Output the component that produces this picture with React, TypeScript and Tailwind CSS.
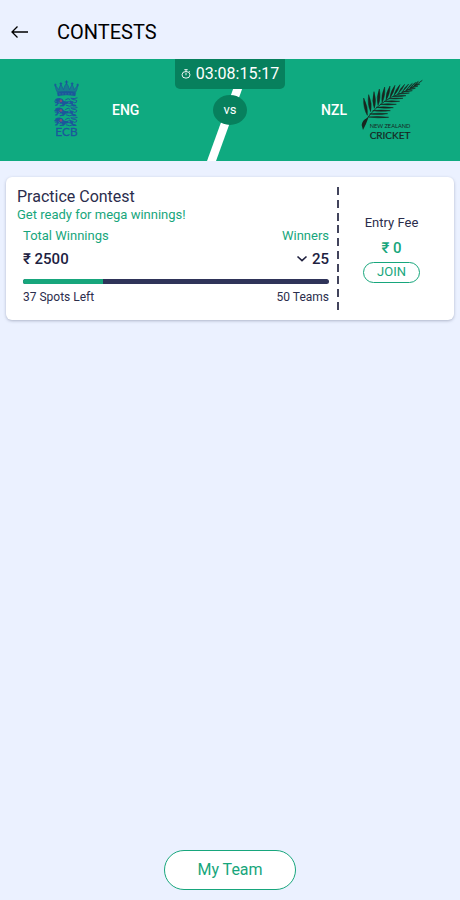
import React from "react";

type Point = [number, number];

// Each leaflet: where it leaves the spine, its tip, and its half width at the belly.
const leaflets: { base: Point; tip: Point; width: number }[] = [
  { base: [37, 132], tip: [26, 80], width: 8 },
  { base: [47, 121], tip: [41, 70], width: 8 },
  { base: [58, 111], tip: [57, 61], width: 8 },
  { base: [69, 102], tip: [73, 53], width: 8 },
  { base: [81, 94], tip: [89, 47], width: 7 },
  { base: [93, 86], tip: [105, 44], width: 7 },
  { base: [105, 79], tip: [120, 42], width: 6 },
  { base: [117, 72], tip: [135, 40], width: 5 },
  { base: [130, 66], tip: [149, 39], width: 4 },
  { base: [143, 60], tip: [161, 38], width: 3 },
  { base: [155, 55], tip: [172, 36], width: 2 },
  { base: [166, 49], tip: [182, 33], width: 2 },
  { base: [177, 43], tip: [190, 30], width: 2 },
  { base: [40, 137], tip: [101, 138], width: 4 },
  { base: [44, 128], tip: [98, 127], width: 4 },
  { base: [53, 118], tip: [106, 118], width: 4 },
  { base: [63, 108], tip: [115, 109], width: 4 },
  { base: [75, 99], tip: [124, 99], width: 4 },
  { base: [88, 90], tip: [134, 90], width: 4 },
  { base: [101, 82], tip: [144, 81], width: 3 },
  { base: [114, 75], tip: [153, 73], width: 3 },
  { base: [127, 68], tip: [163, 65], width: 2 },
  { base: [140, 62], tip: [172, 58], width: 2 },
  { base: [153, 56], tip: [181, 51], width: 2 },
  { base: [165, 50], tip: [189, 44], width: 2 },
  { base: [177, 43], tip: [195, 38], width: 2 },
];

function leafPath(base: Point, tip: Point, width: number) {
  const dx = tip[0] - base[0];
  const dy = tip[1] - base[1];
  const length = Math.hypot(dx, dy);
  const nx = (-dy / length) * width;
  const ny = (dx / length) * width;
  const mx = base[0] + dx * 0.45;
  const my = base[1] + dy * 0.45;
  return `M${base[0]} ${base[1]}Q${mx + nx} ${my + ny} ${tip[0]} ${tip[1]}Q${mx - nx} ${my - ny} ${base[0]} ${base[1]}Z`;
}

function SilverFern() {
  return (
    <svg viewBox="18 20 186 192" className="h-16 w-[62px]" role="img" aria-label="New Zealand Cricket">
      <g fill="#18251f">
        {leaflets.map((leaf) => (
          <path
            key={leaf.tip.join()}
            d={leafPath(leaf.base, leaf.tip, leaf.width)}
            stroke="#18251f"
            strokeWidth="1.5"
          />
        ))}
        <path d="M36 141Q22 146 20 161L24 176Q33 160 40 139Z" />
        <path d="M34 144Q62 104 110 77Q165 57 202 27" fill="none" stroke="#18251f" strokeWidth="2.5" />
        <text x="105" y="171" textAnchor="middle" fontSize="17" className="font-['Lato',sans-serif]">
          NEW ZEALAND
        </text>
        <text x="105" y="203" textAnchor="middle" fontSize="30" stroke="#18251f" strokeWidth="0.6" className="font-['Lato',sans-serif]">
          CRICKET
        </text>
      </g>
    </svg>
  );
}

function Lion({ y }: { y: number }) {
  return (
    <g transform={`translate(0 ${y})`}>
      <path
        d="M3 5L9 2L17 1L25 4L29 10L38 12L50 9L56 13L57 20L65 22L68 27L56 27L51 20L43 18L34 20L29 26L17 27L16 24L25 22L23 19L12 19L9 25L2 25L3 22L7 20L8 16L2 17L2 14L8 12L3 9Z"
        fill="#1b579b"
      />
      <path
        d="M54 12Q62 19 67 14Q71 8 63 7L56 6L50 2L60 3L69 1M1 11L8 9M36 23L46 26L54 24M34 7L42 3L47 6"
        fill="none"
        stroke="#1b579b"
        strokeWidth="3"
        strokeLinecap="round"
        strokeLinejoin="round"
      />
      <path d="M20 9L23 13M42 14H48M13 14L17 17" stroke="#3fa295" strokeWidth="2" />
      <circle cx="20" cy="10" r="4" fill="#7d4c79" />
    </g>
  );
}

function EnglandCrest() {
  return (
    <svg viewBox="0 0 74 184" className="h-[61px] w-[25px]" role="img" aria-label="ECB">
      <g fill="#1b579b" stroke="#1b579b">
        <path
          d="M9 36Q3 26 4 17L14 29Q16 20 20 13L28 29Q31 17 37 9Q43 17 46 29L54 13Q58 20 60 29L70 17Q71 26 65 36Z"
          fillOpacity="0.55"
          strokeWidth="2"
        />
        <path d="M9 38Q37 31 65 38L63 48Q37 42 11 48Z" />
        <path d="M37 1V13M32 6H42M20 7V17M16 11H24M54 7V17M50 11H58M3 11V20M0 15H7M71 11V20M67 15H74" fill="none" strokeWidth="3" />
        <path d="M15 42H59" stroke="#3fa295" strokeWidth="1.5" strokeDasharray="4 5" />
      </g>
      <Lion y={53} />
      <Lion y={82} />
      <Lion y={112} />
      <text x="37" y="170" textAnchor="middle" fontSize="36" fill="#1b579b" stroke="#1b579b" strokeWidth="0.8" className="font-['Lato',sans-serif]">
        ECB
      </text>
    </svg>
  );
}

function StopwatchIcon() {
  return (
    <svg viewBox="0 0 12 12" className="h-[10px] w-[10px]" fill="none" stroke="white" strokeWidth="1.1" aria-hidden="true">
      <ellipse cx="6" cy="7" rx="4.8" ry="4" />
      <path d="M6 4.5V7.5M4 .8H8M6 1V3M9.8 2.8L10.8 3.6" />
    </svg>
  );
}

function MatchBanner() {
  return (
    <section className="relative grid h-[102px] grid-cols-[1fr_34px_1fr] items-center bg-[#0faa80] text-white">
      <svg
        viewBox="0 0 46 102"
        className="absolute bottom-0 left-1/2 -ml-[23px] h-[102px] w-[46px]"
        aria-hidden="true"
      >
        <path d="M0 102L37 0H46L9 102Z" fill="white" />
      </svg>
      <div className="flex items-center gap-[33px] pl-[54px]">
        <EnglandCrest />
        <span className="text-sm font-medium">ENG</span>
      </div>
      <div className="absolute inset-x-0 top-0 flex justify-center">
        <div className="flex h-[30px] w-[110px] items-center justify-center gap-[5px] rounded-b-[5px] bg-[#07805d]">
          <StopwatchIcon />
          <time className="text-base leading-5">03:08:15:17</time>
        </div>
      </div>
      <div className="relative flex h-[30px] items-center justify-center rounded-[50%] bg-[#07805d] text-[13px] leading-4">
        vs
      </div>
      <div className="flex items-center justify-end gap-[14px] pr-[37px]">
        <span className="text-sm font-medium">NZL</span>
        <SilverFern />
      </div>
    </section>
  );
}

function ContestCard() {
  return (
    <article className="mx-[6px] mt-4 flex rounded-[6px] bg-white py-[10px] pr-[10px] pl-[11px] text-[#2b2d4c] shadow-[0_1px_3px_rgba(60,70,100,0.35)]">
      <div className="min-w-0 flex-1">
        <h2 className="text-base leading-5">Practice Contest</h2>
        <p className="text-[13px] leading-4 text-[#17a67c]">Get ready for mega winnings!</p>
        <div className="mr-2 ml-[6px] pt-[5px]">
          <div className="flex justify-between text-[13px] leading-4 text-[#17a67c]">
            <span>Total Winnings</span>
            <span>Winners</span>
          </div>
          <div className="mt-[3px] flex items-center justify-between text-[15px] leading-6 font-medium text-[#20213f]">
            <span>₹ 2500</span>
            <button type="button" className="flex items-center gap-1" aria-label="Winners: 25">
              <svg viewBox="0 0 12 8" className="h-2 w-3" fill="none" stroke="currentColor" strokeWidth="1.6" aria-hidden="true">
                <path d="M1.5 1.5L6 5.7L10.5 1.5" />
              </svg>
              25
            </button>
          </div>
          <div className="mt-2 h-[5px] overflow-hidden rounded-full bg-[#2f3459]">
            <div className="h-full w-[26%] bg-[#17a67c]" />
          </div>
          <div className="mt-[5px] flex justify-between text-xs leading-4">
            <span>37 Spots Left</span>
            <span>50 Teams</span>
          </div>
        </div>
      </div>
      <div className="flex h-[123px] w-[2px] flex-col justify-between" aria-hidden="true">
        {Array.from({ length: 10 }, (_, i) => (
          <span key={i} className="h-2 bg-[#42445c]" />
        ))}
      </div>
      <div className="flex w-[105px] flex-col items-center justify-center">
        <span className="text-[13px] leading-4">Entry Fee</span>
        <span className="mt-[7px] text-[15px] leading-5 font-medium text-[#17a67c]">₹ 0</span>
        <button
          type="button"
          className="mt-1 h-[21px] w-[57px] rounded-full border border-[#17a67c] text-[13px] leading-4 text-[#17a67c]"
        >
          JOIN
        </button>
      </div>
    </article>
  );
}

export default function App() {
  return (
    <div className="flex min-h-screen flex-col bg-[#ebf1ff] font-['Roboto','Noto_Sans',sans-serif]">
      <header className="flex h-[59px] items-center gap-7 pt-1 pl-[11px] text-black">
        <button type="button" aria-label="Back">
          <svg viewBox="0 0 18 14" className="h-[14px] w-[18px]" fill="none" stroke="black" strokeWidth="1.3" aria-hidden="true">
            <path d="M6.5 1.5L1 7L6.5 12.5M1 7H17" />
          </svg>
        </button>
        <h1 className="text-xl leading-6">CONTESTS</h1>
      </header>
      <main className="flex-1">
        <MatchBanner />
        <ContestCard />
      </main>
      <footer className="flex justify-center pb-[10px]">
        <button
          type="button"
          className="h-10 w-[132px] rounded-full border border-[#17a67c] bg-white text-base leading-5 text-[#17a67c]"
        >
          My Team
        </button>
      </footer>
    </div>
  );
}
